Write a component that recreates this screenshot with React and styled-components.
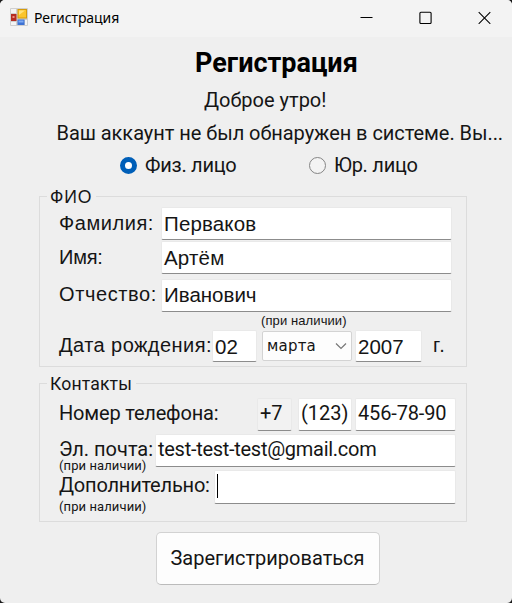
import React from 'react';
import styled, { createGlobalStyle } from 'styled-components';

const ROBOTO = 'Roboto, sans-serif';
const ARIAL = '"Liberation Sans", Arial, sans-serif';

const Global = createGlobalStyle`
  * { box-sizing: border-box; }
  html, body { margin: 0; background: #1b1b1b; }
`;

const Window = styled.main`
  width: 512px;
  height: 603px;
  overflow: hidden;
  border-radius: 5px;
  background: #efefef;
  color: #151515;
  font: 20px ${ROBOTO};
  white-space: nowrap;
`;

const TitleBar = styled.header`
  display: flex;
  align-items: center;
  height: 37px;
  padding-left: 10px;
  background: #f3f3f3;
`;

const AppIcon = styled.svg`
  width: 18px;
  height: 18px;
  margin-top: -3px;
`;

const Caption = styled.span`
  flex: 1;
  margin: -2px 0 0 6px;
  color: #000;
  font: 14px/20px "Noto Sans", sans-serif;
  letter-spacing: -0.06px;
`;

const WindowButtons = styled.div`
  display: flex;
  height: 37px;
  align-items: center;
  gap: 46px;
  padding: 0 21px 2px 0;
`;

const Glyph = styled.svg`
  width: 13px;
  height: 13px;
  fill: none;
  stroke: #000;
  stroke-width: 1.1;
`;

const Heading = styled.h1`
  height: 36px;
  margin: 7px 0 0 195px;
  color: #000;
  font: bold 27px/38px ${ROBOTO};
`;

const Message = styled.p`
  height: ${(p) => p.$height}px;
  margin: 0 0 0 ${(p) => p.$left}px;
  line-height: 40px;
  letter-spacing: ${(p) => p.$spacing || 0}px;
`;

const RadioRow = styled.div`
  display: flex;
  height: 30px;
  padding-left: 120px;
`;

const RadioOption = styled.label`
  display: flex;
  align-items: center;
  width: 189px;
  line-height: 30px;
  letter-spacing: -0.25px;
`;

const RadioMark = styled.span`
  width: 17px;
  height: 17px;
  margin-right: 8px;
  border-radius: 50%;
  border: ${(p) => (p.$checked ? '5px solid #005fb8' : '1px solid #858585')};
  background: ${(p) => (p.$checked ? '#fff' : '#f3f3f3')};
`;

const Group = styled.section`
  display: flex;
  flex-direction: column;
  width: 428px;
  height: ${(p) => p.$height}px;
  margin: ${(p) => p.$top}px 0 0 39px;
  padding-left: 19px;
  border: 1px solid #dcdcdc;
`;

const Legend = styled.h2`
  align-self: flex-start;
  flex: none;
  height: 20px;
  margin: -10px 0 ${(p) => p.$after || 0}px -12px;
  padding: 0 4px 0 3px;
  background: #efefef;
  color: #151515;
  font: 17.6px/20px ${(p) => p.$font};
  letter-spacing: ${(p) => p.$spacing || 0}px;
`;

const Row = styled.div`
  display: flex;
  flex: none;
  height: ${(p) => p.$height}px;
`;

const Label = styled.label`
  flex: none;
  width: ${(p) => p.$width}px;
  font-family: ${(p) => p.$font || ROBOTO};
  line-height: ${(p) => p.$line}px;
  letter-spacing: ${(p) => p.$spacing || 0}px;
`;

const Input = styled.div`
  flex: none;
  width: ${(p) => p.$width}px;
  height: ${(p) => p.$height || 33}px;
  margin-right: ${(p) => p.$gap || 0}px;
  padding-left: 2px;
  border: 1px solid #e9e9e9;
  border-bottom-color: #8c8c8c;
  border-radius: 2px;
  background: ${(p) => (p.$disabled ? '#f2f2f2' : '#fff')};
  font-family: ${(p) => p.$font || ROBOTO};
  font-size: ${(p) => p.$size || 20}px;
  line-height: ${(p) => p.$line}px;
  letter-spacing: ${(p) => p.$spacing || 0}px;
`;

const Note = styled.div`
  font: 13px/${(p) => p.$line}px ${(p) => p.$font || ROBOTO};
  letter-spacing: 0.1px;
  padding: 0 0 ${(p) => p.$after || 0}px ${(p) => p.$indent || 0}px;
`;

const LabelStack = styled.div`
  flex: none;
  display: flex;
  flex-direction: column;
`;

const Select = styled.div`
  display: flex;
  align-items: center;
  justify-content: space-between;
  width: 90px;
  height: 30px;
  margin: 1px 3px 0 0;
  padding: 0 4px 0 4px;
  border: 1px solid #d3d3d3;
  border-radius: 2px;
  background: #fdfdfd;
  font: 15px "DejaVu Sans", sans-serif;
  letter-spacing: 0.2px;
`;

const Chevron = styled.svg`
  width: 12px;
  height: 8px;
  fill: none;
  stroke: #777;
  stroke-width: 1.2;
`;

const Caret = styled.span`
  display: block;
  width: 1px;
  height: 24px;
  margin: 3px 0 0;
  background: #000;
`;

const SubmitButton = styled.button`
  display: block;
  width: 224px;
  height: 53px;
  margin: 10px 0 0 156px;
  padding: 0 1px 1px 0;
  border: 1px solid #d2d2d2;
  border-bottom-color: #bbb;
  border-radius: 5px;
  background: #fdfdfd;
  color: #151515;
  font: 20px ${ROBOTO};
`;

function FormIcon() {
  return (
    <AppIcon viewBox="0 0 18 18">
      <rect width="18" height="18" rx="1" fill="#cfcfcf" />
      <path d="M1 1h5v4H1zM1 14h5v3H1zM15 12h2v5h-2z" fill="#f4f4f4" />
      <rect x="1" y="6" width="5.5" height="7" fill="#b52c22" />
      <rect x="2.5" y="8" width="2" height="2" fill="#ef8b7c" />
      <rect x="7.5" y="1" width="9.5" height="9.5" fill="#d59b0a" />
      <rect x="8.5" y="2" width="7.5" height="7.5" fill="#fbc52c" />
      <path d="M9 2.5h6L9 7z" fill="#ffe27a" />
      <rect x="7.5" y="11.5" width="7" height="5.5" fill="#3d72d4" />
      <rect x="8.5" y="12.5" width="5" height="2" fill="#7eaaf3" />
    </AppIcon>
  );
}

export default function App() {
  return (
    <Window>
      <Global />
      <TitleBar>
        <FormIcon />
        <Caption>Регистрация</Caption>
        <WindowButtons>
          <Glyph viewBox="0 0 13 13"><path d="M.5 6.5h12" /></Glyph>
          <Glyph viewBox="0 0 13 13"><rect x=".9" y="1.3" width="11.2" height="11.2" rx="1" /></Glyph>
          <Glyph viewBox="0 0 13 13"><path d="M.7 1.2l11.6 11.6M12.3 1.2L.7 12.8" /></Glyph>
        </WindowButtons>
      </TitleBar>

      <Heading>Регистрация</Heading>
      <Message $height={33} $left={204}>Доброе утро!</Message>
      <Message $height={37} $left={56.5} $spacing={-0.05}>Ваш аккаунт не был обнаружен в системе. Вы...</Message>
      <RadioRow>
        <RadioOption><RadioMark $checked />Физ. лицо</RadioOption>
        <RadioOption><RadioMark />Юр. лицо</RadioOption>
      </RadioRow>

      <Group $top={16} $height={171}>
        <Legend $font={ARIAL} $spacing={0.9}>ФИО</Legend>
        <Row $height={34}>
          <Label $width={102} $font={ARIAL} $line={32} $spacing={0.55}>Фамилия:</Label>
          <Input $width={291} $line={32} $font={ARIAL} $size={20.5} $spacing={0.15}>Перваков</Input>
        </Row>
        <Row $height={38}>
          <Label $width={102} $line={33} $font={ARIAL} $spacing={-0.2}>Имя:</Label>
          <Input $width={291} $line={31} $font={ARIAL} $size={20.5} $spacing={0.2}>Артём</Input>
        </Row>
        <Row $height={34}>
          <Label $width={102} $line={30} $font={ARIAL} $spacing={0.6}>Отчество:</Label>
          <Input $width={291} $line={30} $font={ARIAL} $size={20.5}>Иванович</Input>
        </Row>
        <Note $font={ARIAL} $line={15} $indent={202} $after={2}>(при наличии)</Note>
        <Row $height={33}>
          <Label $width={153} $line={30} $font={ARIAL} $spacing={0.45}>Дата рождения:</Label>
          <Input $width={45} $gap={5} $height={32} $line={31} $font={ARIAL} $size={20.5}>02</Input>
          <Select>марта<Chevron viewBox="0 0 12 8"><path d="M1 1.5l5 5 5-5" /></Chevron></Select>
          <Input $width={67} $gap={11} $height={32} $line={31} $font={ARIAL} $size={20.5}>2007</Input>
          <Label $width={20} $line={30} $font={ARIAL} $spacing={1.5}>г.</Label>
        </Row>
      </Group>

      <Group $top={16} $height={139}>
        <Legend $font={ROBOTO} $spacing={0.15} $after={4}>Контакты</Legend>
        <Row $height={36}>
          <Label $width={198} $line={30} $spacing={-0.18}>Номер телефона:</Label>
          <Input $width={35} $gap={6} $line={28} $disabled>+7</Input>
          <Input $width={54} $gap={3} $line={28}>(123)</Input>
          <Input $width={101} $line={28} $spacing={-0.15}>456-78-90</Input>
        </Row>
        <Row $height={36}>
          <LabelStack>
            <Label $width={96} $line={30}>Эл. почта:</Label>
            <Note $line={4}>(при наличии)</Note>
          </LabelStack>
          <Input $width={301} $line={28} $spacing={-0.28}>test-test-test@gmail.com</Input>
        </Row>
        <Row $height={50}>
          <LabelStack>
            <Label $width={155} $line={30} $spacing={-0.2}>Дополнительно:</Label>
            <Note $line={14}>(при наличии)</Note>
          </LabelStack>
          <Input $width={242} $height={34} $line={28}><Caret /></Input>
        </Row>
      </Group>

      <SubmitButton>Зарегистрироваться</SubmitButton>
    </Window>
  );
}
